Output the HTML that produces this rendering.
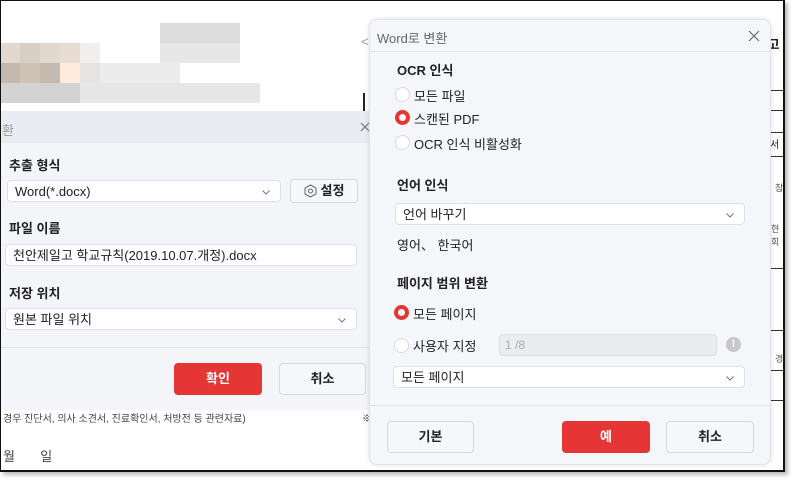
<!DOCTYPE html>
<html><head><meta charset="utf-8"><style>
*{margin:0;padding:0;box-sizing:border-box}
body{width:793px;height:479px;background:#fff;position:relative;overflow:hidden;font-family:"Liberation Sans","Noto Sans CJK KR",sans-serif;color:#222}
.a{position:absolute}
.frame{left:0;top:0;width:785px;height:472px;border:2px solid #111;border-left-width:1px;border-top-width:1px;box-shadow:3px 3px 4px #bbb;overflow:hidden;background:#fff}
.in{position:absolute;left:-1px;top:-1px;width:793px;height:479px}
.px{position:absolute;width:20px;height:20px}
.lbl{font-size:13px;font-weight:bold;color:#222}
.inp{background:#fff;border:1px solid #dcdfe6;border-radius:4px;font-size:13px;padding-left:7px;line-height:22px;color:#222}
.chev{position:absolute;right:10px;top:9px;width:8px;height:5px}
.btn{border:1px solid #d6d8de;border-radius:4px;background:#f6f7f9;font-size:13px;text-align:center;font-weight:bold}
.red{background:#e63535;color:#fff;border-color:#e63535}
.rad{width:15px;height:15px;border-radius:50%;background:#fff;border:1px solid #d8d8d8}
.radon{width:15px;height:15px;border-radius:50%;background:#fff;border:4px solid #e63535}
.t{font-size:13px;color:#222}
</style></head><body>
<div class="a frame"><div class="in">
<div class="px" style="left:0;top:43px;background:#e2d8ce"></div><div class="px" style="left:20px;top:43px;background:#d9cec4"></div><div class="px" style="left:40px;top:43px;background:#e2d8ce"></div><div class="px" style="left:60px;top:43px;background:#e8ddd2"></div><div class="px" style="left:80px;top:43px;background:#f0efee"></div>
<div class="px" style="left:0;top:63px;background:#c2b8ae"></div><div class="px" style="left:20px;top:63px;background:#cfc3b8"></div><div class="px" style="left:40px;top:63px;background:#c4bab0"></div><div class="px" style="left:60px;top:63px;background:#fdebdc"></div><div class="px" style="left:80px;top:63px;background:#e6e4e2"></div><div class="px" style="left:100px;top:63px;width:80px;background:#ececec"></div>
<div class="px" style="left:0;top:83px;width:80px;background:#d3d3d3"></div><div class="px" style="left:80px;top:83px;width:180px;background:#e7e7e7"></div>
<div class="px" style="left:160px;top:23px;width:80px;background:#dcdcdc"></div><div class="px" style="left:160px;top:43px;width:80px;background:#e7e7e7"></div>
<div class="a" style="left:363px;top:93px;width:2px;height:18px;background:#222"></div>
<div class="a t" style="left:361px;top:34px;color:#999">&lt;</div>
<!-- left dialog -->
<div class="a" style="left:0;top:111px;width:369px;height:299px;background:#f4f5f9"></div>
<div class="a" style="left:0;top:111px;width:369px;height:32px;background:#e9ecf2"></div>
<div class="a t" style="left:2px;top:120px;color:#999">환</div>
<svg class="a" style="left:360px;top:122px" width="10" height="10"><path d="M1 1L9 9M9 1L1 9" stroke="#777" stroke-width="1.2"/></svg>
<div class="a lbl" style="left:9px;top:155px">추출 형식</div>
<div class="a inp" style="left:7px;top:180px;width:274px;height:22px">Word(*.docx)<svg class="chev" viewBox="0 0 8 5"><path d="M0.5 0.5L4 4L7.5 0.5" fill="none" stroke="#777"/></svg></div>
<div class="a btn" style="left:290px;top:179px;width:68px;height:24px;line-height:22px">
<svg style="vertical-align:-3px;margin-right:4px" width="13" height="14" viewBox="0 0 13 14"><path d="M6.5 1L12 4v6l-5.5 3L1 10V4z" fill="none" stroke="#666"/><circle cx="6.5" cy="7" r="2" fill="none" stroke="#666"/></svg>설정</div>
<div class="a lbl" style="left:9px;top:218px">파일 이름</div>
<div class="a inp" style="left:5px;top:244px;width:352px;height:22px">천안제일고 학교규칙(2019.10.07.개정).docx</div>
<div class="a lbl" style="left:9px;top:283px">저장 위치</div>
<div class="a inp" style="left:5px;top:308px;width:352px;height:22px">원본 파일 위치<svg class="chev" viewBox="0 0 8 5"><path d="M0.5 0.5L4 4L7.5 0.5" fill="none" stroke="#777"/></svg></div>
<div class="a" style="left:0;top:347px;width:369px;height:1px;background:#dfe1e6"></div>
<div class="a btn red" style="left:174px;top:363px;width:88px;height:32px;line-height:30px">확인</div>
<div class="a btn" style="left:279px;top:363px;width:87px;height:32px;line-height:30px">취소</div>
<div class="a" style="left:3px;top:410px;font-size:10px;color:#444">경우 진단서, 의사 소견서, 진료확인서, 처방전 등 관련자료)</div>
<div class="a t" style="left:3px;top:446px;color:#444">월&nbsp;&nbsp;&nbsp;&nbsp;&nbsp;&nbsp;&nbsp;일</div>
<div class="a" style="left:362px;top:410px;font-size:10px">※</div>
<div class="a" style="left:764px;top:34px;font-size:13px;font-weight:bold">|고</div>
<div class="a" style="left:770px;top:90px;width:15px;height:1px;background:#333"></div>
<div class="a" style="left:770px;top:110px;width:15px;height:1px;background:#333"></div>
<div class="a" style="left:770px;top:132px;width:15px;height:1px;background:#333"></div>
<div class="a" style="left:770px;top:156px;width:15px;height:1px;background:#333"></div>
<div class="a" style="left:770px;top:136px;font-size:10px">서</div>
<div class="a" style="left:775px;top:181px;font-size:9px;color:#555">참</div>
<div class="a" style="left:771px;top:222px;font-size:9px;color:#555">현<br>회</div>
<div class="a" style="left:770px;top:268px;width:15px;height:1px;background:#333"></div>
<div class="a" style="left:770px;top:330px;width:15px;height:1px;background:#333"></div>
<div class="a" style="left:770px;top:370px;width:15px;height:1px;background:#333"></div>
<div class="a" style="left:770px;top:400px;width:15px;height:1px;background:#333"></div>
<div class="a" style="left:775px;top:352px;font-size:9px;color:#555">경</div>
<!-- right dialog -->
<div class="a" style="left:369px;top:19px;width:402px;height:446px;background:#f5f6fa;border:1px solid #e0e2e8;border-radius:8px;box-shadow:0 0 6px rgba(0,0,0,.12)"></div>
<div class="a" style="left:370px;top:51px;width:400px;height:1px;background:#e0e2e8"></div>
<div class="a t" style="left:377px;top:28px;color:#666">Word로 변환</div>
<svg class="a" style="left:748px;top:30px" width="12" height="12"><path d="M1 1L11 11M11 1L1 11" stroke="#666" stroke-width="1.2"/></svg>
<div class="a lbl" style="left:397px;top:60px">OCR 인식</div>
<div class="a rad" style="left:395px;top:87px"></div><div class="a t" style="left:414px;top:86px">모든 파일</div>
<div class="a radon" style="left:395px;top:110px"></div><div class="a t" style="left:414px;top:109px">스캔된 PDF</div>
<div class="a rad" style="left:395px;top:135px"></div><div class="a t" style="left:414px;top:134px">OCR 인식 비활성화</div>
<div class="a lbl" style="left:397px;top:175px">언어 인식</div>
<div class="a inp" style="left:395px;top:203px;width:350px;height:22px">언어 바꾸기<svg class="chev" viewBox="0 0 8 5"><path d="M0.5 0.5L4 4L7.5 0.5" fill="none" stroke="#777"/></svg></div>
<div class="a t" style="left:397px;top:235px">영어、 한국어</div>
<div class="a lbl" style="left:397px;top:273px">페이지 범위 변환</div>
<div class="a radon" style="left:394px;top:305px"></div><div class="a t" style="left:413px;top:304px">모든 페이지</div>
<div class="a rad" style="left:394px;top:338px"></div><div class="a t" style="left:413px;top:336px">사용자 지정</div>
<div class="a" style="left:499px;top:334px;width:218px;height:22px;background:#ebecef;border:1px solid #dcdee3;border-radius:4px;font-size:12px;color:#aaa;padding-left:5px;line-height:20px">1 /8</div>
<div class="a" style="left:726px;top:337px;width:15px;height:15px;border-radius:50%;background:#c8c8cc;color:#fff;font-size:11px;font-weight:bold;text-align:center;line-height:15px">!</div>
<div class="a inp" style="left:393px;top:366px;width:352px;height:22px">모든 페이지<svg class="chev" viewBox="0 0 8 5"><path d="M0.5 0.5L4 4L7.5 0.5" fill="none" stroke="#777"/></svg></div>
<div class="a" style="left:370px;top:405px;width:400px;height:1px;background:#e0e2e8"></div>
<div class="a btn" style="left:387px;top:421px;width:87px;height:32px;line-height:30px">기본</div>
<div class="a btn red" style="left:562px;top:421px;width:88px;height:32px;line-height:30px">예</div>
<div class="a btn" style="left:666px;top:421px;width:88px;height:32px;line-height:30px">취소</div>
</div></div>
</body></html>
